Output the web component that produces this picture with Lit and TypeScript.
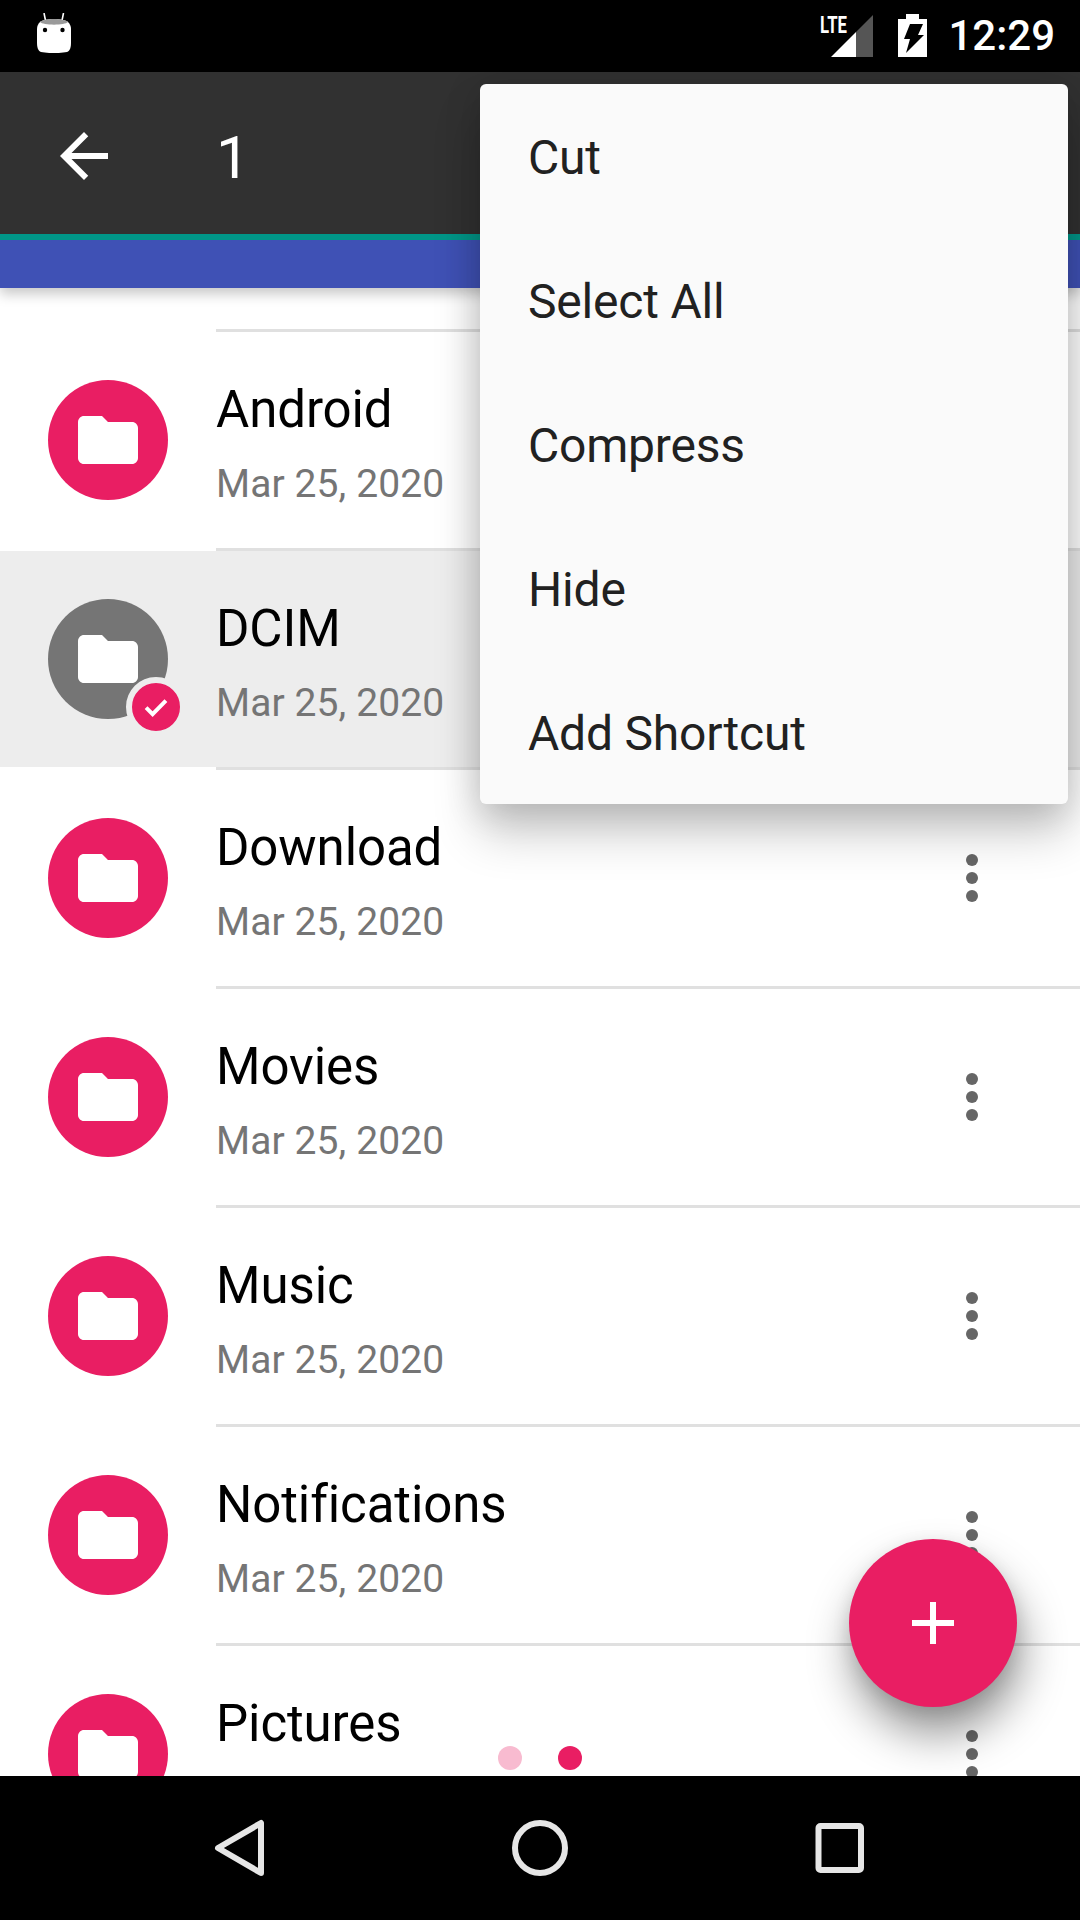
import { LitElement, html, css, svg } from "lit";
import { customElement } from "lit/decorators.js";

const FOLDERS = ["Android", "DCIM", "Download", "Movies", "Music", "Notifications", "Pictures"];
const MENU = ["Cut", "Select All", "Compress", "Hide", "Add Shortcut"];

const folderPath = svg`<path d="M10 4H4c-1.1 0-1.99.9-1.99 2L2 18c0 1.1.9 2 2 2h16c1.1 0 2-.9 2-2V8c0-1.1-.9-2-2-2h-8l-2-2z" fill="#fff"/>`;

@customElement("app-root")
export class AppRoot extends LitElement {
	static override styles = css`
		:host {
			display: block;
			width: 1080px;
			height: 1920px;
			font-family: Roboto, "Liberation Sans", sans-serif;
		}
		.screen {
			position: relative;
			display: flex;
			flex-direction: column;
			height: 1920px;
			overflow: hidden;
			background: #fff;
		}
		.status {
			display: flex;
			align-items: center;
			height: 72px;
			padding: 0 25px 0 37px;
			background: #000;
			color: #fff;
			flex: none;
		}
		.status .robot {
			display: block;
			width: 34px;
			height: 40px;
			margin-top: -6px;
		}
		.status .signal {
			display: block;
			width: 54px;
			height: 42px;
			margin-left: auto;
			overflow: visible;
		}
		.status .battery {
			display: block;
			width: 29px;
			height: 43px;
			margin-left: 24px;
			margin-top: -1px;
		}
		.status .time {
			margin-left: 21px;
			font-size: 42px;
			font-weight: 500;
			line-height: 72px;
		}
		.appbar {
			position: relative;
			z-index: 2;
			flex: none;
			box-shadow: 0 6px 12px rgba(0, 0, 0, 0.22);
		}
		.toolbar {
			display: flex;
			align-items: center;
			height: 162px;
			padding: 6px 0 0 48px;
			box-sizing: border-box;
			background: #313131;
			color: #fff;
		}
		.toolbar svg {
			display: block;
			width: 72px;
			height: 72px;
		}
		.toolbar .count {
			margin-left: 96px;
			padding-top: 4px;
			font-size: 60px;
			line-height: 72px;
		}
		.accent {
			height: 6px;
			background: #009688;
		}
		.tabs {
			height: 48px;
			background: #3f51b5;
		}
		.list {
			flex: 1;
			min-height: 0;
			overflow: hidden;
		}
		.lead {
			height: 41px;
		}
		.divider {
			height: 3px;
			margin-left: 216px;
			background: #e0e0e0;
		}
		.row {
			display: flex;
			align-items: center;
			height: 216px;
			padding-left: 48px;
		}
		.row.selected {
			background: #ededed;
		}
		.avatar {
			position: relative;
			display: flex;
			align-items: center;
			justify-content: center;
			flex: none;
			width: 120px;
			height: 120px;
			border-radius: 50%;
			background: #e91e63;
		}
		.selected .avatar {
			background: #757575;
		}
		.avatar svg {
			display: block;
			width: 72px;
			height: 72px;
		}
		.badge {
			position: absolute;
			left: 78px;
			top: 78px;
			display: flex;
			align-items: center;
			justify-content: center;
			width: 48px;
			height: 48px;
			border: 6px solid #ededed;
			border-radius: 50%;
			background: #e91e63;
		}
		.badge svg {
			width: 34px;
			height: 34px;
		}
		.text {
			flex: 1;
			margin-left: 48px;
			padding-top: 10px;
		}
		.name {
			font-size: 51px;
			line-height: 60px;
			letter-spacing: -0.1px;
			color: #000;
		}
		.date {
			margin-top: 17px;
			font-size: 39px;
			line-height: 54px;
			letter-spacing: 0.1px;
			color: #757575;
		}
		.more {
			display: flex;
			flex-direction: column;
			gap: 6px;
			flex: none;
			margin-right: 102px;
		}
		.more i {
			display: block;
			width: 12px;
			height: 12px;
			border-radius: 50%;
			background: #666;
		}
		.menu {
			position: absolute;
			z-index: 3;
			left: 480px;
			top: 84px;
			width: 588px;
			border-radius: 6px;
			background: #fafafa;
			box-shadow: 0 30px 48px rgba(0, 0, 0, 0.2), 0 6px 36px rgba(0, 0, 0, 0.16);
		}
		.menu div {
			box-sizing: border-box;
			height: 144px;
			padding: 3px 0 0 48px;
			font-size: 48px;
			line-height: 141px;
			letter-spacing: -0.2px;
			color: #212121;
		}
		.fab {
			position: absolute;
			z-index: 2;
			left: 849px;
			top: 1539px;
			display: flex;
			align-items: center;
			justify-content: center;
			width: 168px;
			height: 168px;
			border-radius: 50%;
			background: #e91e63;
			box-shadow: 4px 27px 45px rgba(0, 0, 0, 0.42), 0 6px 18px rgba(0, 0, 0, 0.1);
		}
		.fab svg {
			display: block;
			width: 72px;
			height: 72px;
		}
		.pager {
			position: absolute;
			z-index: 1;
			left: 498px;
			top: 1746px;
			display: flex;
			gap: 36px;
		}
		.pager i {
			display: block;
			width: 24px;
			height: 24px;
			border-radius: 50%;
			background: #e91e63;
		}
		.pager i.off {
			background: #f8bbd0;
		}
		.nav {
			position: relative;
			z-index: 2;
			flex: none;
			display: flex;
			align-items: center;
			height: 144px;
			padding-left: 212px;
			box-sizing: border-box;
			background: #000;
		}
		.nav svg {
			display: block;
			flex: none;
		}
		.nav .home {
			margin-left: 242px;
		}
		.nav .recent {
			margin-left: 243px;
		}
	`;

	private renderRow(name: string) {
		const selected = name === "DCIM";
		return html`
			<div class="row ${selected ? "selected" : ""}">
				<div class="avatar">
					<svg viewBox="0 0 24 24">${folderPath}</svg>
					${selected
						? html`<span class="badge">
								<svg viewBox="0 0 24 24">
									<path d="M5 12.5l4.6 4.6L19 7.5" fill="none" stroke="#fff" stroke-width="2.8" />
								</svg>
							</span>`
						: ""}
				</div>
				<div class="text">
					<div class="name">${name}</div>
					<div class="date">Mar 25, 2020</div>
				</div>
				<div class="more"><i></i><i></i><i></i></div>
			</div>
			<div class="divider"></div>
		`;
	}

	override render() {
		return html`
			<div class="screen">
				<div class="status">
					<svg class="robot" viewBox="0 0 34 40">
						<path d="M7 0l2 10M26.500 0l-2 10" stroke="#fff" stroke-width="1.600" fill="none" />
						<path d="M3 9c4-4 24-4 28 0 2 2 3 4 3 7v14c0 4-1 8-4 9-7 1.500-19 1.500-26 0-3-1-4-5-4-9V16c0-3 1-5 3-7z" fill="#fff" />
						<path d="M3 9c4-4 24-4 28 0-3 3.500-25 3.500-28 0z" fill="#9a9a9a" />
						<circle cx="8" cy="17" r="2.200" fill="#000" />
						<circle cx="25.500" cy="17" r="2.200" fill="#000" />
					</svg>
					<svg class="signal" viewBox="0 0 54 42">
						<text x="0" y="18" font-family="Roboto, sans-serif" font-size="24" font-weight="700" fill="#fff" textLength="27" lengthAdjust="spacingAndGlyphs">LTE</text>
						<path d="M11 42L36 17V42z" fill="#fff" />
						<path d="M36 17L53 0V42H36z" fill="#555" />
					</svg>
					<svg class="battery" viewBox="0 0 29 43">
						<path d="M8 0h13v5h8v38H0V5h8z" fill="#fff" />
						<path d="M12 10h13l-5 11h6L8 39l4-14H6z" fill="#000" />
					</svg>
					<span class="time">12:29</span>
				</div>
				<div class="appbar">
					<div class="toolbar">
						<svg viewBox="0 0 24 24">
							<path d="M20 11H7.830l5.590-5.590L12 4l-8 8 8 8 1.410-1.410L7.830 13H20v-2z" fill="#fff" />
						</svg>
						<span class="count">1</span>
					</div>
					<div class="accent"></div>
					<div class="tabs"></div>
				</div>
				<div class="list">
					<div class="lead"></div>
					<div class="divider"></div>
					${FOLDERS.map((name) => this.renderRow(name))}
				</div>
				<div class="pager"><i class="off"></i><i></i></div>
				<div class="fab">
					<svg viewBox="0 0 24 24"><path d="M19 13h-6v6h-2v-6H5v-2h6V5h2v6h6v2z" fill="#fff" /></svg>
				</div>
				<div class="menu">${MENU.map((item) => html`<div>${item}</div>`)}</div>
				<div class="nav">
					<svg width="56" height="60" viewBox="0 0 56 60">
						<path d="M6 30L49 5v50z" fill="none" stroke="#e6e6e6" stroke-width="6" stroke-linejoin="round" />
					</svg>
					<svg class="home" width="60" height="60" viewBox="0 0 60 60">
						<circle cx="30" cy="30" r="25" fill="none" stroke="#e6e6e6" stroke-width="6" />
					</svg>
					<svg class="recent" width="54" height="54" viewBox="0 0 54 54">
						<rect x="5.500" y="5" width="42.500" height="44" rx="2" fill="none" stroke="#e6e6e6" stroke-width="6" />
					</svg>
				</div>
			</div>
		`;
	}
}
